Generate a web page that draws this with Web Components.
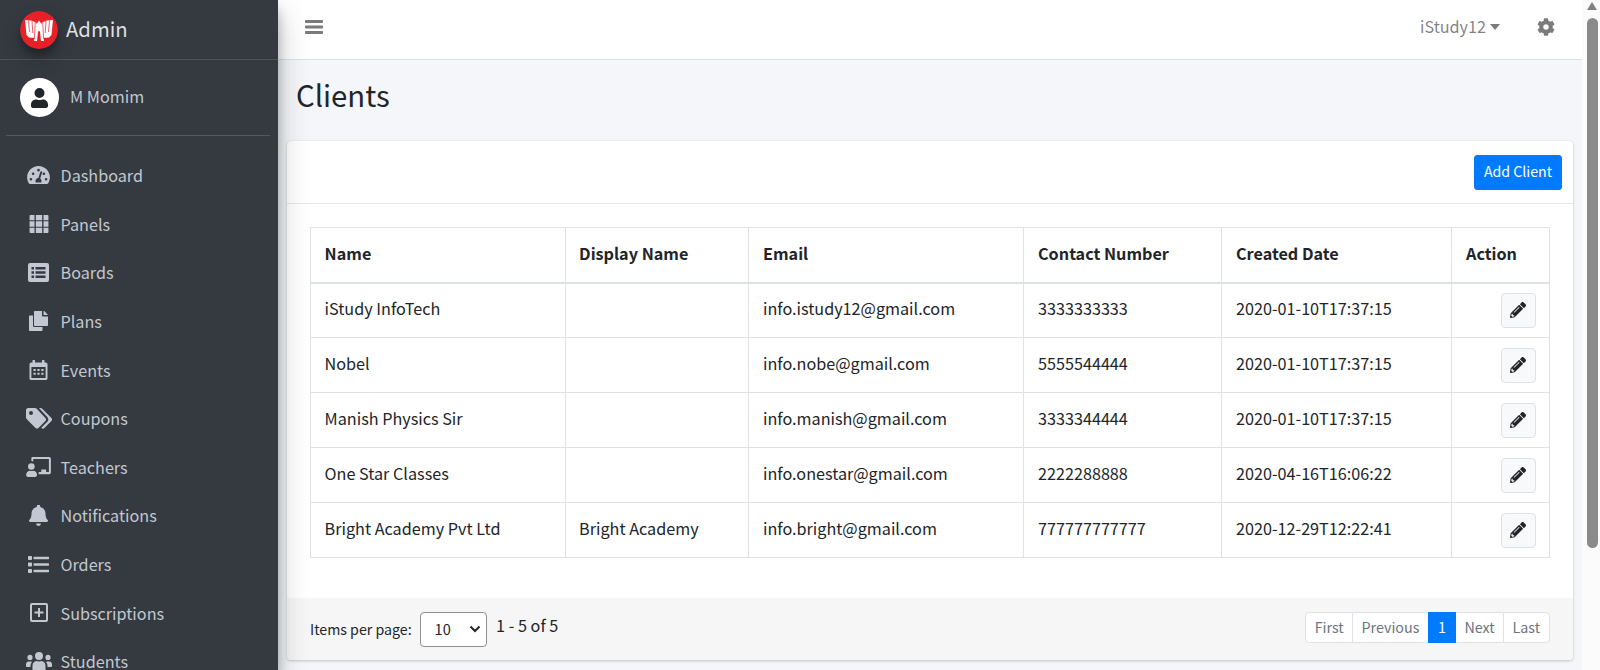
<!DOCTYPE html>
<html>
<head>
<meta charset="utf-8">
<title>Clients</title>
<style>
  html, body { margin: 0; height: 100%; overflow: hidden; }
  body { font-family: "Noto Sans CJK SC", "Noto Sans", sans-serif; font-size: 16.2px; line-height: 24px; color: #212529; background: #f4f6f9; }
</style>
</head>
<body>
<app-shell>
  <side-bar slot="side" brand="Admin" user="M Momim">
    <nav-item icon="dashboard">Dashboard</nav-item>
    <nav-item icon="panels">Panels</nav-item>
    <nav-item icon="boards">Boards</nav-item>
    <nav-item icon="plans">Plans</nav-item>
    <nav-item icon="events">Events</nav-item>
    <nav-item icon="coupons">Coupons</nav-item>
    <nav-item icon="teachers">Teachers</nav-item>
    <nav-item icon="bell">Notifications</nav-item>
    <nav-item icon="orders">Orders</nav-item>
    <nav-item icon="plus">Subscriptions</nav-item>
    <nav-item icon="students">Students</nav-item>
  </side-bar>
  <top-bar slot="top" account="iStudy12"></top-bar>
  <clients-page slot="main"></clients-page>
  <fake-scrollbar slot="scroll"></fake-scrollbar>
</app-shell>

<script>
const ICONS = {
  dashboard: '<svg width="23" height="18" viewBox="0 0 24 19"><path fill-rule="evenodd" d="M12 0C5.400 0 0 5.400 0 12c0 2.200.6 4.400 1.700 6.200.3.500.8.8 1.400.8h17.800c.6 0 1.100-.3 1.400-.8C23.400 16.400 24 14.200 24 12 24 5.400 18.600 0 12 0zM12 3a1.400 1.400 0 1 1 0 2.800A1.400 1.400 0 0 1 12 3zM4 15.400a1.400 1.400 0 1 1 0-2.800 1.400 1.400 0 0 1 0 2.800zM6.300 9.600a1.400 1.400 0 1 1 0-2.800 1.400 1.400 0 0 1 0 2.800zM15.800 6.800l-2 6.500c.8.500 1.400 1.500 1.400 2.500 0 .6-.1 1.100-.4 1.500H9.200c-.3-.4-.4-.9-.4-1.500 0-1.700 1.400-3.100 3.100-3.200l2.100-6.500a.9.9 0 0 1 1.800.7zM17.700 9.600a1.400 1.400 0 1 1 0-2.800 1.400 1.400 0 0 1 0 2.800zM20 15.400a1.400 1.400 0 1 1 0-2.800 1.400 1.400 0 0 1 0 2.800z"/></svg>',
  panels: '<svg width="20" height="18" viewBox="0 0 21 20"><path d="M0 1a1 1 0 0 1 1-1h4.500v5.800H0zM7 0h7v5.800H7zM15.500 0H20a1 1 0 0 1 1 1v4.800h-5.500zM0 7h5.500v6H0zM7 7h7v6H7zM15.500 7H21v6h-5.500zM0 14.200h5.500V20H1a1 1 0 0 1-1-1zM7 14.200h7V20H7zM15.500 14.200H21V19a1 1 0 0 1-1 1h-4.500z"/></svg>',
  boards: '<svg width="21" height="19" viewBox="0 0 21 19"><path fill-rule="evenodd" d="M2 0h17a2 2 0 0 1 2 2v15a2 2 0 0 1-2 2H2a2 2 0 0 1-2-2V2a2 2 0 0 1 2-2zM3.500 4v2.500H6V4zM7.500 4v2.500h10V4zM3.500 8.300v2.500H6V8.300zM7.500 8.300v2.500h10V8.300zM3.500 12.500V15H6v-2.500zM7.500 12.500V15h10v-2.500z"/></svg>',
  plans: '<svg width="19" height="20" viewBox="0 0 19 20"><path d="M13.500 15.500V19c0 .6-.4 1-1 1H1c-.6 0-1-.4-1-1V5.500c0-.6.400-1 1-1h3v10c0 .9.700 1.600 1.600 1.600h7.900z"/><path d="M13 4.500V0H6c-.6 0-1 .4-1 1v13c0 .6.400 1 1 1h12c.6 0 1-.4 1-1V5.500h-5a1 1 0 0 1-1-1z"/><path d="M18.700 3.500 15.500.3a1 1 0 0 0-.7-.3h-.3v4h4v-.3c0-.1-.1-.1-.1-.2z" /></svg>',
  events: '<svg width="19" height="20" viewBox="0 0 18 20"><path fill-rule="evenodd" d="M3.500 0h1.500c.3 0 .5.200.5.500V2.500h7V.5c0-.3.200-.5.500-.5h1.500c.3 0 .5.200.5.500V2.500h1.100C17.200 2.500 18 3.300 18 4.300V18.200C18 19.200 17.200 20 16.200 20H1.800C.8 20 0 19.200 0 18.200V4.300C0 3.300.8 2.500 1.800 2.500H3V.5c0-.3.200-.5.500-.5zM1.900 7v11h14.200V7zM4 9h2.200v2H4zM7.900 9h2.200v2H7.900zM11.800 9H14v2h-2.200zM4 12.700h2.200v2H4zM7.900 12.700h2.200v2H7.900zM11.800 12.700H14v2h-2.200z"/></svg>',
  coupons: '<svg width="26" height="21" viewBox="0 0 26 21"><path fill-rule="evenodd" d="M0 2.200V9.500c0 .6.200 1.100.6 1.500l8.900 8.900c.9.900 2.200.9 3 0l6.900-6.900c.9-.9.900-2.200 0-3L10.500.6C10.100.2 9.600 0 9 0H2.200C1 0 0 1 0 2.200zM5 7a2 2 0 1 1 0-4 2 2 0 0 1 0 4z"/><path d="M13 0h1.500c.6 0 1.100.2 1.500.6l9.400 9.400c.9.800.9 2.100 0 3l-7 7c-.8.900-2.100.9-3 0l-.1-.2 6-6c1.400-1.300 1.400-3.400 0-4.800z"/></svg>',
  teachers: '<svg width="25" height="20" viewBox="0 0 26 21"><path d="M5.500 6.500a3.500 3.500 0 1 1 0 7 3.500 3.500 0 0 1 0-7zM0 19c0-2.500 2-4.500 4.300-4.500.4 0 1 .3 1.500.3.600 0 1.100-.3 1.500-.3C9.700 14.500 11.500 16.500 11.500 19c0 1.100-.9 2-2 2H2c-1.100 0-2-.9-2-2z"/><path d="M6.500 0h17.700C25.200 0 26 .8 26 1.800v14.400c0 1-.8 1.800-1.800 1.800H13.200v-2.200h2.700v-2.600h5.100v2.600h2.900V2.200H7.500V4.800c-.6-.3-1.300-.5-2-.5V1.500C5.500.7 5.800 0 6.500 0z"/></svg>',
  bell: '<svg width="19" height="21" viewBox="0 0 19 21"><path d="M9.500 21c1.300 0 2.400-1.100 2.400-2.400H7.100c0 1.300 1.100 2.400 2.400 2.400zM18.600 14.800c-.9-1-2.100-2.300-2.100-6.300 0-3.200-2.300-5.800-5.300-6.400V1.300a1.700 1.700 0 0 0-3.400 0v.800C4.800 2.700 2.500 5.300 2.500 8.500c0 4-1.200 5.300-2.100 6.300-.3.300-.4.600-.4.900 0 .6.500 1.200 1.200 1.200h16.600c.7 0 1.200-.6 1.200-1.200 0-.3-.1-.6-.4-.9z"/></svg>',
  orders: '<svg width="21" height="17" viewBox="0 0 21 17"><path d="M1 0h2c.5 0 1 .4 1 1v2c0 .5-.5 1-1 1H1c-.6 0-1-.5-1-1V1c0-.6.400-1 1-1zM1 6.500h2c.5 0 1 .4 1 1v2c0 .5-.5 1-1 1H1c-.6 0-1-.5-1-1v-2c0-.6.400-1 1-1zM1 13h2c.5 0 1 .4 1 1v2c0 .5-.5 1-1 1H1c-.6 0-1-.5-1-1v-2c0-.6.400-1 1-1zM6 .7h14.500c.3 0 .5.200.5.500v1.600c0 .3-.2.500-.5.500H6c-.3 0-.5-.2-.5-.5V1.200C5.500.9 5.700.7 6 .7zM6 7.200h14.500c.3 0 .5.200.5.500v1.600c0 .3-.2.500-.5.500H6c-.3 0-.5-.2-.5-.5V7.700c0-.3.200-.5.500-.5zM6 13.700h14.500c.3 0 .5.200.5.500v1.600c0 .3-.2.500-.5.500H6c-.3 0-.5-.2-.5-.5v-1.600c0-.3.200-.5.500-.5z"/></svg>',
  plus: '<svg width="18" height="19" viewBox="0 0 18 19"><path fill-rule="evenodd" d="M2 0h14a2 2 0 0 1 2 2v15a2 2 0 0 1-2 2H2a2 2 0 0 1-2-2V2a2 2 0 0 1 2-2zM2 2v15h14V2zM8 5h2v3.500h3.500v2H10V14H8v-3.500H4.500v-2H8z"/></svg>',
  students: '<svg width="26" height="18" viewBox="0 0 26 18"><path d="M13 8a3.900 3.900 0 1 0 0-8 3.900 3.900 0 0 0 0 8zM4 8a2.600 2.600 0 1 0 0-5.200A2.600 2.600 0 0 0 4 8zM22 8a2.600 2.600 0 1 0 0-5.200A2.600 2.600 0 0 0 22 8zM6.500 18V13.500c0-2.300 1.700-4.500 4-4.500.6 0 1.400.5 2.500.5s1.900-.5 2.500-.5c2.300 0 4 2.200 4 4.500V18zM0 14.500v-2c0-1.700 1.200-3 2.700-3h2.100c.5 0 1 .2 1.300.5-1 1-1.500 2.500-1.600 3.800v1.200H1c-.6 0-1-.2-1-.5zM26 14.500v-2c0-1.700-1.200-3-2.700-3h-2.100c-.5 0-1 .2-1.300.5 1 1 1.500 2.500 1.600 3.800v1.200H25c.6 0 1-.2 1-.5z"/></svg>'
};

function shadow(el, html) {
  el.attachShadow({ mode: 'open' });
  el.shadowRoot.innerHTML = html;
}

class AppShell extends HTMLElement {
  connectedCallback() {
    shadow(this, `
      <style>
        :host { display: flex; height: 100vh; overflow: hidden; }
        .content { flex: 1; min-width: 0; display: flex; flex-direction: column; }
        ::slotted([slot=side]) { flex: none; }
        ::slotted([slot=scroll]) { flex: none; }
      </style>
      <slot name="side"></slot>
      <div class="content">
        <slot name="top"></slot>
        <slot name="main"></slot>
      </div>
      <slot name="scroll"></slot>
    `);
  }
}

class SideBar extends HTMLElement {
  connectedCallback() {
    shadow(this, `
      <style>
        :host { display: block; width: 278px; height: 100vh; overflow: hidden; background: #343a40; box-shadow: 0 14px 28px rgba(0,0,0,.25), 0 10px 10px rgba(0,0,0,.22); color: #c2c7d0; position: relative; z-index: 2; }
        .brand { display: flex; align-items: center; height: 59px; border-bottom: 1px solid #4b545c; padding-left: 20px; color: rgba(255,255,255,.85); font-size: 20.3px; line-height: 30px; }
        .brand span { margin-top: -4px; }
        .logo { width: 38px; height: 38px; border-radius: 50%; margin-right: 8px; box-shadow: 0 10px 20px rgba(0,0,0,.19), 0 6px 6px rgba(0,0,0,.23); display: block; }
        .user { margin: 0 8px 0 6px; padding-left: 14px; height: 75px; border-bottom: 1px solid #4f5962; display: flex; align-items: center; }
        .user span { margin-top: -3px; }
        .avatar { width: 39px; height: 39px; border-radius: 50%; background: #fff; display: flex; align-items: center; justify-content: center; margin-right: 11px; }
        .avatar svg { width: 17px; height: 20px; fill: #212529; }
        nav { padding-top: 15px; }
      </style>
      <div class="brand">
        <svg class="logo" viewBox="0 0 38 38">
          <circle cx="19" cy="19" r="19" fill="#e72127"/>
          <path fill="#fff" d="M5 9 11 9.500 15 11 17 13 15.500 27 9 26.500 6.500 24z"/>
          <path fill="#fff" d="M33 9 27 9.500 23 11 21 13 22.500 27 29 26.500 31.500 24z"/>
          <path fill="#fff" d="M16.500 13 19 9.500 21.500 13 24 30 21 30 20 21C19.700 19.500 18.300 19.500 18 21L17 30 14 30z"/>
          <path fill="none" stroke="#e72127" stroke-width=".7" d="M8.500 9.500 9.500 21M12 10 12.800 22M29.500 9.500 28.500 21M26 10 25.200 22M15.300 11.500 14.300 28M22.700 11.500 23.700 28"/>
        </svg>
        <span>${this.getAttribute('brand')}</span>
      </div>
      <div class="user">
        <div class="avatar"><svg viewBox="0 0 17 20"><path d="M8.500 10a5 5 0 1 0 0-10 5 5 0 0 0 0 10zM5 11.500c-2.800 0-5 2.200-5 5v1.600C0 19.200.8 20 1.900 20h13.200c1.100 0 1.900-.8 1.900-1.900v-1.600c0-2.800-2.200-5-5-5-.9 0-1.900.6-3.500.6s-2.600-.6-3.500-.6z"/></svg></div>
        <span>${this.getAttribute('user')}</span>
      </div>
      <nav><slot></slot></nav>
    `);
  }
}

class NavItem extends HTMLElement {
  connectedCallback() {
    shadow(this, `
      <style>
        :host { display: block; height: 48.6px; }
        a { display: flex; align-items: center; height: 48.6px; padding-left: 25px; color: #c2c7d0; }
        .ico { width: 27px; display: flex; justify-content: center; margin-right: 8.5px; flex: none; }
        svg { fill: #c2c7d0; display: block; }
      </style>
      <a><span class="ico">${ICONS[this.getAttribute('icon')]}</span><slot></slot></a>
    `);
  }
}

class TopBar extends HTMLElement {
  connectedCallback() {
    shadow(this, `
      <style>
        :host { display: flex; flex: none; align-items: center; justify-content: space-between; height: 60px; box-sizing: border-box; background: #fff; border-bottom: 1px solid #dee2e6; color: rgba(0,0,0,.5); padding-bottom: 5px; }
        .burger { width: 18px; height: 20px; margin-left: 27px; fill: #7b7b7b; display: block; }
        .right { display: flex; align-items: center; }
        .acct { display: flex; align-items: center; }
        .acct span:first-child { margin-top: -2px; }
        .caret { width: 0; height: 0; margin-left: 4px; margin-top: -1px; border-top: 6px solid #7b7b7b; border-left: 5.500px solid transparent; border-right: 5.500px solid transparent; }
        .gear { width: 18px; height: 18px; fill: #7b7b7b; margin: 0 27px 0 37px; display: block; }
      </style>
      <svg class="burger" viewBox="0 0 18 20"><path d="M1 3h16c.5 0 1 .4 1 1v1c0 .5-.5 1-1 1H1c-.6 0-1-.5-1-1V4c0-.6.400-1 1-1zM1 8.500h16c.5 0 1 .4 1 1v1c0 .5-.5 1-1 1H1c-.6 0-1-.5-1-1v-1c0-.6.400-1 1-1zM1 14h16c.5 0 1 .4 1 1v1c0 .5-.5 1-1 1H1c-.6 0-1-.5-1-1v-1c0-.6.400-1 1-1z"/></svg>
      <div class="right">
        <div class="acct"><span>${this.getAttribute('account')}</span><span class="caret"></span></div>
        <svg class="gear" viewBox="0 0 512 512"><path d="M487.400 315.700l-42.600-24.600c4.300-23.200 4.300-47 0-70.200l42.600-24.600c4.900-2.800 7.100-8.600 5.500-14-11.100-35.600-30-67.800-54.700-94.600-3.800-4.100-10-5.100-14.800-2.300L380.800 110c-17.900-15.400-38.500-27.300-60.800-35.100V25.800c0-5.600-3.900-10.500-9.400-11.700-36.700-8.200-74.300-7.800-109.200 0-5.500 1.200-9.400 6.100-9.400 11.700V75c-22.200 7.900-42.800 19.800-60.800 35.100L88.700 85.500c-4.900-2.800-11-1.900-14.800 2.300-24.700 26.700-43.600 58.900-54.700 94.600-1.700 5.400.6 11.200 5.500 14L67.300 221c-4.300 23.200-4.300 47 0 70.200l-42.600 24.600c-4.900 2.800-7.100 8.600-5.500 14 11.100 35.600 30 67.800 54.700 94.600 3.800 4.100 10 5.100 14.800 2.300l42.600-24.600c17.900 15.400 38.500 27.300 60.800 35.100v49.200c0 5.600 3.900 10.500 9.400 11.700 36.700 8.200 74.300 7.800 109.200 0 5.500-1.200 9.400-6.100 9.400-11.700v-49.200c22.200-7.900 42.800-19.800 60.800-35.100l42.600 24.600c4.900 2.800 11 1.900 14.800-2.300 24.700-26.700 43.600-58.900 54.700-94.600 1.500-5.500-.7-11.300-5.600-14.100zM256 336c-44.100 0-80-35.900-80-80s35.900-80 80-80 80 35.900 80 80-35.900 80-80 80z"/></svg>
      </div>
    `);
  }
}

class ClientsPage extends HTMLElement {
  connectedCallback() {
    shadow(this, `
      <style>
        :host { display: block; flex: 1; min-height: 0; overflow: hidden; padding: 0 9px 0 9px; }
        h1 { margin: 0; padding: 14px 0 0 9px; height: 65px; box-sizing: border-box; font-size: 29.3px; line-height: 40px; font-weight: 400; color: #212529; }
        .card { margin-top: 16px; background: #fff; border-radius: 4px; box-shadow: 0 0 1px rgba(0,0,0,.125), 0 1px 3px rgba(0,0,0,.2); height: 519px; display: flex; flex-direction: column; }
        .head { display: flex; justify-content: flex-end; align-items: center; height: 63px; box-sizing: border-box; padding-right: 11px; border-bottom: 1px solid #e5e7ea; }
        .add { width: 88px; background: #007bff; color: #fff; border: 1px solid #007bff; border-radius: 3px; font: inherit; font-size: 14.2px; height: 35px; padding: 0 0 3px; line-height: 28px; }
        .body { flex: 1; padding: 23px 23.500px 0 23px; }
        .foot { background: #f6f6f7; height: 62px; box-sizing: border-box; border-radius: 0 0 4px 4px; display: flex; align-items: center; padding: 0 23.500px 0 23px; }
        page-footer { flex: 1; }
      </style>
      <h1>Clients</h1>
      <section class="card">
        <div class="head"><button class="add">Add Client</button></div>
        <div class="body">
          <client-table></client-table>
        </div>
        <div class="foot"><page-footer></page-footer></div>
      </section>
    `);
  }
}

const CLIENTS = [
  ['iStudy InfoTech', '', 'info.istudy12@gmail.com', '3333333333', '2020-01-10T17:37:15'],
  ['Nobel', '', 'info.nobe@gmail.com', '5555544444', '2020-01-10T17:37:15'],
  ['Manish Physics Sir', '', 'info.manish@gmail.com', '3333344444', '2020-01-10T17:37:15'],
  ['One Star Classes', '', 'info.onestar@gmail.com', '2222288888', '2020-04-16T16:06:22'],
  ['Bright Academy Pvt Ltd', 'Bright Academy', 'info.bright@gmail.com', '777777777777', '2020-12-29T12:22:41']
];

class ClientTable extends HTMLElement {
  connectedCallback() {
    const rows = CLIENTS.map(r => `<tr>${r.map(c => `<td>${c}</td>`).join('')}<td class="act"><button class="edit"><svg viewBox="0 0 512 512"><path d="M497.900 142.100l-46.100 46.100c-4.700 4.700-12.300 4.700-17 0l-111-111c-4.700-4.700-4.700-12.300 0-17l46.100-46.100c18.700-18.700 49.100-18.700 67.900 0l60.100 60.100c18.800 18.700 18.800 49.100 0 67.900zM284.200 99.800L21.600 362.400.4 483.900c-2.900 16.400 11.400 30.600 27.800 27.800l121.500-21.300 262.600-262.600c4.700-4.700 4.700-12.300 0-17l-111-111c-4.800-4.700-12.400-4.700-17.100 0zM124.100 339.900c-5.500-5.500-5.500-14.300 0-19.800l154-154c5.500-5.500 14.300-5.500 19.800 0s5.500 14.300 0 19.800l-154 154c-5.500 5.500-14.300 5.500-19.800 0zM88 424h48v36.300l-64.500 11.300-31.100-31.100L51.700 376H88v48z"/></svg></button></td></tr>`).join('');
    shadow(this, `
      <style>
        :host { display: block; }
        table { width: 100%; border-collapse: collapse; font-size: 16.2px; table-layout: fixed; }
        th, td { border: 1px solid #dee2e6; padding: 0 14px 4px; text-align: left; height: 55px; box-sizing: border-box; color: #212529; }
        th:nth-child(-n+2), td:nth-child(-n+2) { padding-left: 13.6px; }
        th { font-weight: 700; border-bottom-width: 2px; }
        td.act { text-align: right; padding: 0 13px 0 0; }
        .edit { width: 35px; height: 35px; padding: 0; border: 1px solid #dee2e6; border-radius: 4px; background: #f8f9fa; display: inline-flex; align-items: center; justify-content: center; vertical-align: middle; }
        .edit svg { width: 16px; height: 16px; fill: #212529; display: block; }
      </style>
      <table>
        <colgroup><col style="width:254.5px"><col style="width:183.5px"><col style="width:275px"><col style="width:198px"><col style="width:230px"><col></colgroup>
        <thead><tr><th>Name</th><th>Display Name</th><th>Email</th><th>Contact Number</th><th>Created Date</th><th>Action</th></tr></thead>
        <tbody>${rows}</tbody>
      </table>
    `);
  }
}

class PageFooter extends HTMLElement {
  connectedCallback() {
    const pages = ['First', 'Previous', '1', 'Next', 'Last'];
    shadow(this, `
      <style>
        :host { display: flex; align-items: center; justify-content: space-between; }
        .left { display: flex; align-items: center; font-size: 14.2px; color: #212529; }
        .sel { width: 67px; height: 35px; box-sizing: border-box; border: 1px solid #8f8f8f; border-radius: 4px; background: #fff; margin: 0 9.500px 0 8px; padding: 0 5px 0 14px; display: flex; align-items: center; justify-content: space-between; font-size: 14.5px; }
        .sel svg { width: 12px; height: 8px; display: block; }
        .count { font-size: 16.2px; margin-top: -8px; }
        .pager { display: flex; font-size: 14.3px; line-height: 28px; color: #6c757d; margin-top: -4px; }
        .pager span { background: #fff; border: 1px solid #dee2e6; margin-left: -1px; padding: 0 8.4px 1px; }
        .pager span:first-child { border-radius: 4px 0 0 4px; margin-left: 0; }
        .pager span:last-child { border-radius: 0 4px 4px 0; }
        .pager .on { background: #007bff; border-color: #007bff; color: #fff; position: relative; padding: 0 9.2px 1px; }
      </style>
      <div class="left">
        <span>Items per page:</span>
        <div class="sel"><span>10</span><svg viewBox="0 0 12 8"><path d="M1.500 1.500 6 6l4.500-4.500" fill="none" stroke="#212529" stroke-width="2"/></svg></div>
        <span class="count">1 - 5 of 5</span>
      </div>
      <div class="pager">${pages.map(p => `<span class="${p === '1' ? 'on' : ''}">${p}</span>`).join('')}</div>
    `);
  }
}

class FakeScrollbar extends HTMLElement {
  connectedCallback() {
    shadow(this, `
      <style>
        :host { display: flex; flex-direction: column; align-items: center; box-sizing: border-box; padding-left: 2px; width: 18px; height: 100vh; background: #fbfbfb; }
        .up { width: 0; height: 0; margin-top: 2px; border-bottom: 8px solid #7f7f7f; border-left: 5px solid transparent; border-right: 5px solid transparent; }
        .thumb { width: 11px; height: 530px; margin-top: 8px; border-radius: 6px; background: #8a8a8a; }
      </style>
      <div class="up"></div>
      <div class="thumb"></div>
    `);
  }
}

customElements.define('app-shell', AppShell);
customElements.define('side-bar', SideBar);
customElements.define('nav-item', NavItem);
customElements.define('top-bar', TopBar);
customElements.define('clients-page', ClientsPage);
customElements.define('client-table', ClientTable);
customElements.define('page-footer', PageFooter);
customElements.define('fake-scrollbar', FakeScrollbar);
</script>
</body>
</html>
